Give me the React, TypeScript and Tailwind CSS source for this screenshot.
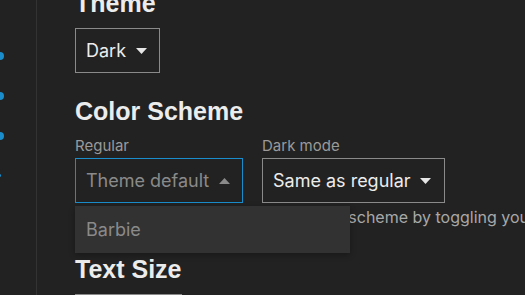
import React from "react";

function Caret({ up = false, color }: { up?: boolean; color: string }) {
  return (
    <svg width="11" height="6" viewBox="0 0 11 6" className="shrink-0">
      {up ? (
        <polygon points="0,6 11,6 5.5,0" fill={color} />
      ) : (
        <polygon points="0,0 11,0 5.5,6" fill={color} />
      )}
    </svg>
  );
}

export default function App() {
  const sans = { fontFamily: "Inter, 'Noto Sans', sans-serif" };
  const head = { fontFamily: "'Liberation Sans', Arial, sans-serif" };
  return (
    <div className="w-[525px] h-[295px] overflow-hidden bg-[#222222] flex items-start" style={sans}>
      <div className="w-[37px] h-[295px] shrink-0 border-r border-[#333333] flex flex-col pt-[52px] gap-[32px]">
        <div className="w-[8px] h-[8px] rounded-full bg-[#1a8dcc] -ml-[4px]" />
        <div className="w-[8px] h-[8px] rounded-full bg-[#1a8dcc] -ml-[4px]" />
        <div className="w-[8px] h-[8px] rounded-full bg-[#1a8dcc] -ml-[4px]" />
        <div className="w-[4px] h-[3px] rounded-full bg-[#1a8dcc] -ml-[3px] mt-[2px]" />
      </div>
      <div className="pl-[38px] flex flex-col relative shrink-0">
        <h2 className="text-[25px] leading-[25px] font-bold text-[#ececec] -mt-[9px]" style={head}>
          Theme
        </h2>
        <div className="mt-[12px] w-[85px] h-[45px] shrink-0 border border-[#8a8a8a] flex items-center pl-[10px] pr-[13px] gap-[10px]">
          <span className="text-[18px] text-[#ececec]">Dark</span>
          <Caret color="#e6e6e6" />
        </div>
        <h2 className="mt-[26px] text-[25px] leading-[25px] font-bold text-[#ececec]" style={head}>
          Color Scheme
        </h2>
        <div className="mt-[12px] flex gap-[19px]">
          <div className="flex flex-col">
            <label className="text-[15px] leading-[20px] text-[#9a9a9a] mb-[2px]">Regular</label>
            <div className="w-[168px] h-[45px] shrink-0 border border-[#1a8dcc] flex items-center pl-[10px] pr-[12px] justify-between">
              <span className="text-[18px] text-[#8a8a8a]">Theme default</span>
              <Caret up color="#8a8a8a" />
            </div>
          </div>
          <div className="flex flex-col">
            <label className="text-[15px] leading-[20px] text-[#9a9a9a] mb-[2px]">Dark mode</label>
            <div className="w-[183px] h-[45px] shrink-0 border border-[#8a8a8a] flex items-center pl-[10px] pr-[13px] justify-between">
              <span className="text-[18px] text-[#ececec]">Same as regular</span>
              <Caret color="#e6e6e6" />
            </div>
          </div>
        </div>
        <p className="mt-[2px] text-[16px] leading-[24px] text-[#a8a8a8] whitespace-nowrap">
          You could choose a different colour scheme by toggling your device's dark mode.
        </p>
        <h2 className="mt-[28px] text-[25px] leading-[25px] font-bold text-[#ececec]" style={head}>
          Text Size
        </h2>
        <div className="mt-[12px] w-[107px] h-[45px] shrink-0 border border-[#8a8a8a]" />
        <div className="absolute left-[38px] top-[206px] w-[275px] h-[47px] bg-[#323232] flex items-center pl-[11px] shadow-[0_2px_6px_rgba(0,0,0,0.3)]">
          <span className="text-[18px] text-[#8a8a8a]">Barbie</span>
        </div>
      </div>
    </div>
  );
}
